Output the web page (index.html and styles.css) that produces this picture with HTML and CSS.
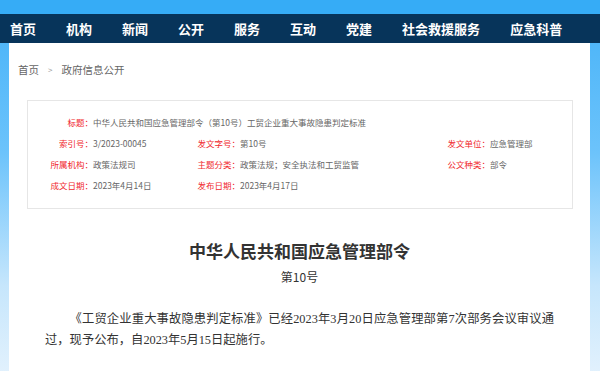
FILE: index.html
```html
<!DOCTYPE html>
<html lang="zh-CN">
  <head>
    <meta charset="UTF-8" />
    <meta name="viewport" content="width=device-width, initial-scale=1.0" />
    <title>中华人民共和国应急管理部令（第10号）</title>
    <link rel="stylesheet" href="styles.css">
  </head>

  <body>
    <div class="top-band"></div>

    <!-- 主导航 -->
    <nav class="nav">
      <a href="#">首页</a>
      <a href="#">机构</a>
      <a href="#">新闻</a>
      <a href="#">公开</a>
      <a href="#">服务</a>
      <a href="#">互动</a>
      <a href="#">党建</a>
      <a href="#">社会救援服务</a>
      <a href="#">应急科普</a>
    </nav>

    <main class="main">
      <!-- 面包屑 -->
      <div class="crumb">
        <a href="#">首页</a>
        <span class="sep">&gt;</span>
        <a href="#">政府信息公开</a>
      </div>

      <!-- 信息表 -->
      <div class="info">
        <span class="label">标题：</span>
        <span class="value wide">中华人民共和国应急管理部令（第10号）工贸企业重大事故隐患判定标准</span>

        <span class="label">索引号：</span>
        <span class="value">3/2023-00045</span>
        <span class="label">发文字号：</span>
        <span class="value">第10号</span>
        <span class="label">发文单位：</span>
        <span class="value">应急管理部</span>

        <span class="label">所属机构：</span>
        <span class="value">政策法规司</span>
        <span class="label">主题分类：</span>
        <span class="value">政策法规；安全执法和工贸监管</span>
        <span class="label">公文种类：</span>
        <span class="value">部令</span>

        <span class="label">成文日期：</span>
        <span class="value">2023年4月14日</span>
        <span class="label">发布日期：</span>
        <span class="value">2023年4月17日</span>
      </div>

      <!-- 正文 -->
      <h1 class="doc-title">中华人民共和国应急管理部令</h1>
      <p class="doc-no">第10号</p>
      <div class="doc-body">
        <p>《工贸企业重大事故隐患判定标准》已经2023年3月20日应急管理部第7次部务会议审议通过，现予公布，自2023年5月15日起施行。</p>
      </div>
    </main>
  </body>
</html>
```

FILE: styles.css
```css
html,
body {
  margin: 0;
  padding: 0;
}

body {
  min-height: 371px;
  background: linear-gradient(#45b2f8 0%, #6cc3fb 40%, #c6e6fc 75%, #e4f2fd 100%);
  font-family: "Noto Sans CJK SC", "Noto Sans", sans-serif;
  color: #333;
}

a {
  color: inherit;
  text-decoration: none;
}

p,
h1 {
  margin: 0;
}

.top-band {
  height: 14px;
  background: #36acf6;
}

/* 主导航 */
.nav {
  height: 29px;
  background: #07345a;
  display: flex;
  align-items: center;
  gap: 30px;
  padding-left: 10px;
}

.nav a {
  color: #fff;
  font-size: 13px;
  font-weight: bold;
  line-height: 29px;
}

/* 内容区 */
.main {
  margin: 0 10px 0 9px;
  background: #fff;
  padding: 17px 0 30px;
}

.crumb {
  display: flex;
  align-items: center;
  gap: 8px;
  padding-left: 9px;
  height: 19px;
  font-size: 10.5px;
  color: #666;
}

.crumb .sep {
  font-size: 8px;
  color: #999;
  padding: 0 1px;
}

/* 信息表 */
.info {
  margin: 21px 17px 0 18px;
  border: 1px solid #e6e6e6;
  padding: 10px 0 13px;
  display: grid;
  grid-template-columns: 65px 82px 65px 185px 65px 1fr;
  grid-auto-rows: 21px;
  align-items: center;
  font-size: 8.5px;
}

.info .label {
  color: #f0282d;
  text-align: right;
}

.info .value {
  color: #666;
  white-space: nowrap;
}

.info .wide {
  grid-column: 2 / 7;
}

/* 正文 */
.doc-title {
  margin-top: 30px;
  text-align: center;
  font-size: 17px;
  line-height: 24px;
  font-weight: bold;
  color: #333;
}

.doc-no {
  margin-top: 5px;
  text-align: center;
  font-size: 12px;
  line-height: 18px;
  color: #333;
}

.doc-body {
  margin-top: 23px;
  padding: 0 36px 0 36px;
  font-family: "Liberation Serif", "Noto Sans CJK SC", serif;
  font-size: 12.3px;
  line-height: 21px;
  color: #333;
}

.doc-body p {
  text-indent: 2em;
  text-align: justify;
}
```
